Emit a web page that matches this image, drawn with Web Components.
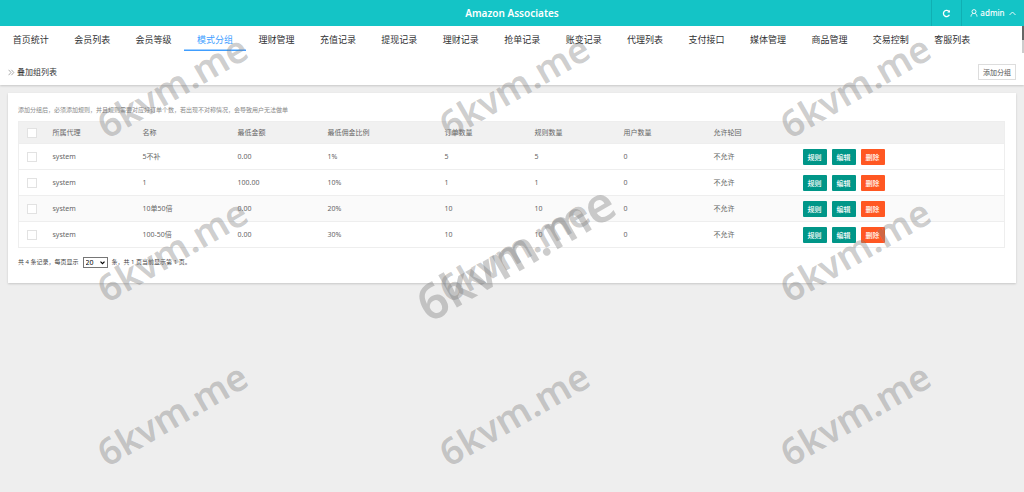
<!DOCTYPE html>
<html lang="zh-CN">
<head>
<meta charset="utf-8">
<title>Amazon Associates</title>
<style>
body{margin:0;background:#eee;font-family:"Noto Sans","Noto Sans CJK SC",sans-serif;color:#666;min-height:100vh}
</style>
</head>
<body>
<admin-app></admin-app>
<script>
const define = (name, html, setup) => customElements.define(name, class extends HTMLElement {
  connectedCallback() {
    if (this.shadowRoot) return;
    const t = document.createElement('template');
    t.innerHTML = html;
    this.attachShadow({mode: 'open'}).append(t.content.cloneNode(true));
    if (setup) setup(this, this.shadowRoot);
  }
});

define('top-bar', `
<style>
:host{display:grid;grid-template-columns:1fr auto 1fr;align-items:center;height:26px;background:#14c4c6;color:#fff}
h1{grid-column:2;margin:0;font-size:10px;line-height:26px;font-weight:600}
.tools{display:flex;justify-content:flex-end;height:26px}
button,a{box-sizing:border-box;border:0;border-left:1px solid #10afb3;background:none;color:#fff;display:flex;align-items:center;justify-content:center;padding:0;font:500 8px/26px "Noto Sans",sans-serif;text-decoration:none}
button{width:30px}
a{width:63px;gap:2px}
svg{display:block;fill:none;stroke:#fff}
.up{margin-left:2px}
</style>
<h1>Amazon Associates</h1>
<div class="tools">
<button type="button" aria-label="刷新"><svg width="9" height="9" viewBox="0 0 9 9" stroke-width="1.3"><path d="M7.4 5.7A3.1 3.1 0 1 1 6.6 2.1L7.4 2.9"/><path d="M8 .9V3.6H5.2Z" fill="#fff" stroke="none"/></svg></button>
<a href="#user"><svg width="8" height="8" viewBox="0 0 8 8" stroke-width=".9"><circle cx="4" cy="2.6" r="2"/><path d="M1 7.6C1.1 5.7 2 4.8 3.1 4.4M4.9 4.4C6 4.8 6.9 5.7 7 7.6"/></svg>admin<svg class="up" width="7" height="5" viewBox="0 0 7 5"><path d="M.5 4 3.5 1 6.5 4" stroke-width=".9"/></svg></a>
</div>`);

define('nav-tabs', `
<style>
:host{display:block;background:#fff;position:relative}
nav{display:grid;grid-template-columns:repeat(16,6%);height:25px}
a{display:block;box-sizing:border-box;height:25px;text-align:center;color:#303133;text-decoration:none;font-size:9px;line-height:27px;white-space:nowrap}
a[aria-current]{color:#409eff;border-bottom:1px solid #409eff;box-shadow:inset 0 -1px #a0cfff}
i{position:absolute;right:0;top:0;width:2px;height:14px;background:#666;border-bottom:13px solid #ccc}
</style>
<nav></nav><i></i>`, (el, root) => {
  const nav = root.querySelector('nav');
  el.getAttribute('items').split(' ').forEach(text => {
    const a = document.createElement('a');
    a.href = '#';
    a.textContent = text;
    if (text === el.getAttribute('current')) a.setAttribute('aria-current', 'page');
    nav.append(a);
  });
});

define('page-heading', `
<style>
:host{display:flex;align-items:center;justify-content:space-between;box-sizing:border-box;height:34px;padding:8px 8px 0;background:#fff;box-shadow:0 1px 2px rgba(0,0,0,.16)}
h2{display:flex;align-items:center;gap:2px;margin:0;font-size:8px;line-height:12px;font-weight:400;color:#333}
button{box-sizing:border-box;width:38px;height:16px;padding:0;border:1px solid #ddd;background:#fff;color:#555;font:400 7px/14px "Noto Sans CJK SC",sans-serif;white-space:nowrap}
</style>
<h2><svg width="7" height="7" viewBox="0 0 7 7" fill="none" stroke="#888" stroke-width=".7"><path d="M.6.8 3 3.5.6 6.2M3.4.8 5.8 3.5 3.4 6.2"/></svg><slot></slot></h2>
<button type="button">添加分组</button>`);

define('action-button', `
<style>
:host{display:block}
button{display:block;width:24px;height:16px;padding:0;border:0;border-radius:1px;background:var(--fill,#009688);color:#fff;font:500 7px/16px "Noto Sans CJK SC",sans-serif;white-space:nowrap}
</style>
<button type="button"><slot></slot></button>`);

define('group-table', `
<style>
:host{display:block}
table{width:100%;table-layout:fixed;border-collapse:collapse;border:1px solid #eee;font-size:7px;line-height:10px}
th,td{padding:0 0 0 6px;text-align:left;font-weight:400;border-bottom:1px solid #eee;height:25px;white-space:nowrap}
th{height:21px;background:#f1f1f1}
th:first-child,td:first-child{padding-left:8px}
tbody tr:nth-child(3){background:#fafafa}
input{display:block;appearance:none;box-sizing:border-box;width:10px;height:10px;margin:0;border:1px solid #e2e2e2;background:#fff}
.actions{display:flex;gap:5px}
action-button.del{--fill:#ff5722}
.c28{width:28px}.c89{width:89px}.c90{width:90px}.c95{width:95px}.c117{width:117px}
</style>
<table>
<colgroup><col class="c28"><col class="c90"><col class="c95"><col class="c90"><col class="c117"><col class="c90"><col class="c89"><col class="c90"><col class="c89"><col></colgroup>
<thead><tr><th><input type="checkbox" aria-label="全选"></th><th>所属代理</th><th>名称</th><th>最低金额</th><th>最低佣金比例</th><th>订单数量</th><th>规则数量</th><th>用户数量</th><th>允许轮回</th><th></th></tr></thead>
<tbody></tbody>
</table>`, (el, root) => {
  const rows = [
    ['5不补', '0.00', '1%', '5', '5'],
    ['1', '100.00', '10%', '1', '1'],
    ['10单50倍', '0.00', '20%', '10', '10'],
    ['100-50倍', '0.00', '30%', '10', '10']
  ];
  root.querySelector('tbody').innerHTML = rows.map(r =>
    `<tr><td><input type="checkbox" aria-label="选择 ${r[0]}"></td>` +
    ['system', ...r, '0', '不允许'].map(c => `<td>${c}</td>`).join('') +
    `<td><div class="actions"><action-button>规则</action-button><action-button>编辑</action-button><action-button class="del">删除</action-button></div></td></tr>`
  ).join('');
});

define('page-pager', `
<style>
:host{display:flex;align-items:center;gap:4px;height:12px;margin-top:8px;font-size:6px;line-height:12px;white-space:nowrap;color:#444}
.pick{position:relative;display:block}
select{display:block;appearance:none;box-sizing:border-box;width:25px;height:11px;margin:0;padding:0 0 0 2px;border:1px solid #767676;border-radius:0;background:#fff;color:#000;font:400 7px/9px "Noto Sans",sans-serif}
svg{position:absolute;right:3px;top:4px;pointer-events:none}
</style>
<label for="size">共 4 条记录&#65292;每页显示</label>
<span class="pick"><select id="size"><option>20</option><option>40</option><option>60</option></select><svg width="5" height="4" viewBox="0 0 5 4"><path d="M.5.7 2.5 2.7 4.5.7" fill="none" stroke="#000" stroke-width="1.2"/></svg></span>
<span>条&#65292;共 1 页当前显示第 1 页。</span>`);

define('content-card', `
<style>
:host{display:block;margin:8px 8px 0;padding:12px 11px 15px 10px;background:#fff;box-shadow:0 1px 2px rgba(0,0,0,.16)}
p{margin:0 0 5px;font-size:6px;line-height:11px;color:#888}
</style>
<p>添加分组后&#65292;必须添加规则&#65292;并且规则需要对应好订单个数&#65292;若出现不对称情况&#65292;会导致用户无法做单</p>
<slot></slot>`);

define('water-mark', `
<style>
:host{position:absolute;transform:translate(-50%,-50%) rotate(-30deg);font:600 37px/48px "Noto Sans",sans-serif;color:rgba(128,128,128,.4);pointer-events:none;white-space:nowrap}
:host([large]){font-size:49px}
</style>
<slot></slot>`);

define('admin-app', `
<style>
:host{display:block;position:relative;min-height:100vh;overflow:hidden}
.marks{position:absolute;inset:0;pointer-events:none}
</style>
<top-bar></top-bar>
<nav-tabs current="模式分组" items="首页统计 会员列表 会员等级 模式分组 理财管理 充值记录 提现记录 理财记录 抢单记录 账变记录 代理列表 支付接口 媒体管理 商品管理 交易控制 客服列表"></nav-tabs>
<page-heading>叠加组列表</page-heading>
<content-card><group-table></group-table><page-pager></page-pager></content-card>
<div class="marks"></div>`, (el, root) => {
  const marks = root.querySelector('.marks');
  const add = (x, y, large) => {
    const m = document.createElement('water-mark');
    m.textContent = '6kvm.me';
    m.style.left = x + 'px';
    m.style.top = y + 'px';
    m.toggleAttribute('large', large);
    marks.append(m);
  };
  for (const y of [86, 250, 414]) for (const x of [172, 514, 855]) add(x, y, false);
  add(515, 252, true);
});
</script>
</body>
</html>
